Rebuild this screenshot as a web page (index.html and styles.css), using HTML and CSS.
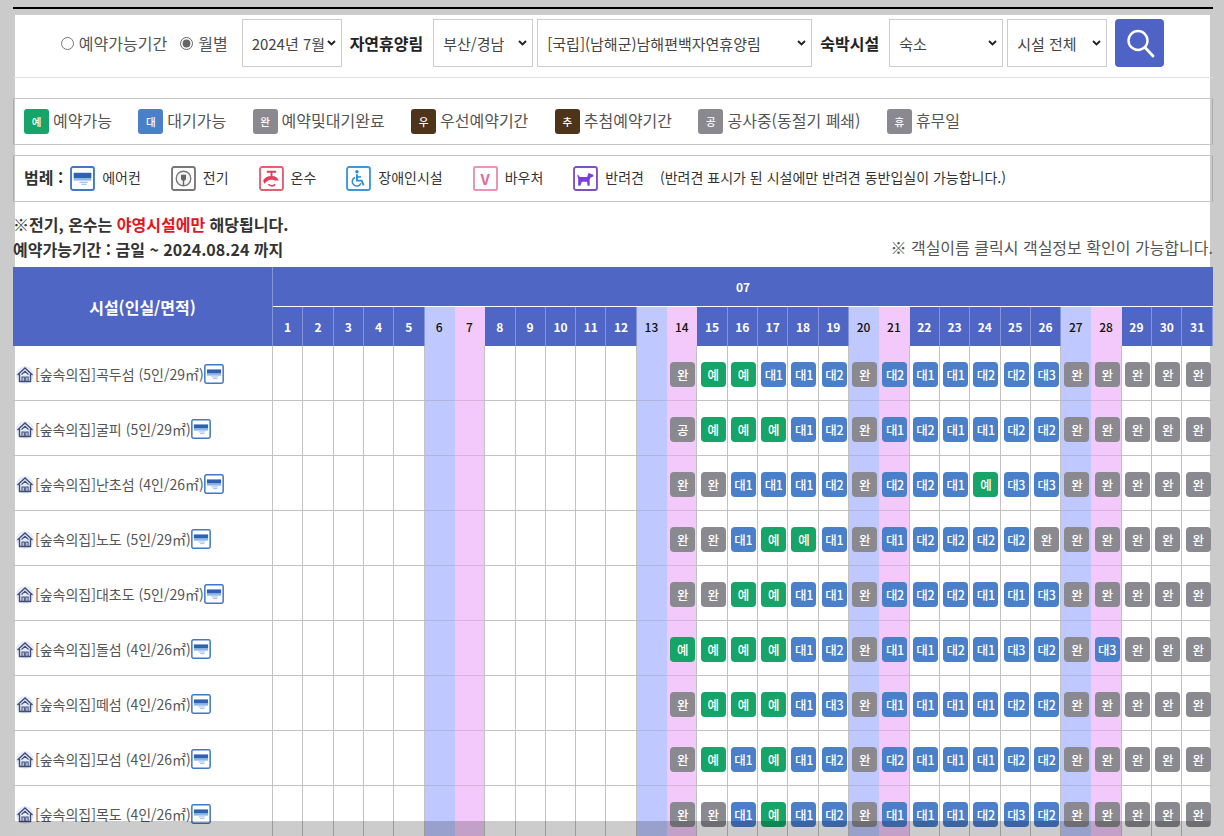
FILE: index.html
```html
<!DOCTYPE html>
<html lang="ko">
<head>
<meta charset="utf-8">
<title>예약현황</title>
<link rel="stylesheet" href="styles.css">
</head>
<body>
<svg class="sprite" aria-hidden="true">
  <defs>
    <symbol id="i-ac" viewBox="0 0 24 24">
      <rect x="1" y="1" width="22" height="22" rx="2" fill="#fff" stroke="#3f78c8" stroke-width="1.8"/>
      <path d="M3.5 6.500h17v5h-17z" fill="#2f62b0"/>
      <path d="M3.5 11.500h17v2.500h-17z" fill="#8db8ea"/>
      <path d="M9 15.500h8M11 17.500h5" stroke="#8fb2e0" stroke-width="1"/>
    </symbol>
    <symbol id="i-plug" viewBox="0 0 24 24">
      <rect x="1" y="1" width="22" height="22" rx="2" fill="#fff" stroke="#777" stroke-width="1.8"/>
      <circle cx="12" cy="12" r="7" fill="#f4f4f4" stroke="#777" stroke-width="1.3"/>
      <path d="M9.6 8.500v3.200a2.400 2.400 0 0 0 4.800 0V8.500z" fill="#666"/>
      <path d="M12 13v6" stroke="#666" stroke-width="1.300"/>
    </symbol>
    <symbol id="i-tap" viewBox="0 0 24 24">
      <rect x="1" y="1" width="22" height="22" rx="2" fill="#fff" stroke="#e85d6f" stroke-width="1.8"/>
      <path d="M7.500 5.500h9M12 5.500v4" stroke="#e0405a" stroke-width="1.800"/>
      <path d="M4 14c1-3 4-4.500 8-4.500s6 1.500 7 4.500h-4c-1-1-5-1-7 .5l-3 2.500z" fill="#e0405a"/>
      <path d="M9 17.500c2 2 5 2 6.500 0" fill="none" stroke="#e0405a" stroke-width="1.600"/>
    </symbol>
    <symbol id="i-wheel" viewBox="0 0 24 24">
      <rect x="1" y="1" width="22" height="22" rx="2" fill="#fff" stroke="#3a9ad9" stroke-width="1.8"/>
      <circle cx="10.500" cy="5.500" r="1.700" fill="#2a8fd4"/>
      <path d="M10.500 8v6h4.500l2 4.500" fill="none" stroke="#2a8fd4" stroke-width="1.800"/>
      <path d="M10.500 10.500h4" stroke="#2a8fd4" stroke-width="1.500"/>
      <path d="M8.500 11a4.300 4.300 0 1 0 5.800 5.500" fill="none" stroke="#2a8fd4" stroke-width="1.500"/>
    </symbol>
    <symbol id="i-dog" viewBox="0 0 24 24">
      <rect x="1" y="1" width="22" height="22" rx="2" fill="#fff" stroke="#7d4fc6" stroke-width="1.8"/>
      <path d="M4.500 8l2 2.500h7l1.500-4 1.500 1 3 1v1.500l-2.500 1-1 2v6h-2l-.5-4h-5l-1.500 4h-2v-6.500l-.8-3.500z" fill="#7a3fd8"/>
    </symbol>
    <symbol id="i-house" viewBox="0 0 18 18">
      <circle cx="9" cy="9" r="9" fill="#e6eaf6"/>
      <path d="M1.500 9L9 2 16.500 9M3.500 8v7.500h11V8" fill="none" stroke="#3f4f7a" stroke-width="1.400"/>
      <path d="M5.500 8.500L9 5.300l3.500 3.200M6 15.500V11h2.300v4.500M9.800 15.500V11h2.300v4.500" fill="none" stroke="#3f4f7a" stroke-width="1.100"/>
    </symbol>
  </defs>
</svg>

<div class="page">
  <div class="rule"></div>
  <main class="sheet">
    <form class="search">
      <label class="radio first"><input type="radio" name="mode">예약가능기간</label>
      <label class="radio second"><input type="radio" name="mode" checked>월별</label>
      <select class="s-month"><option>2024년 7월</option></select>
      <strong class="s-label">자연휴양림</strong>
      <select class="s-region"><option>부산/경남</option></select>
      <select class="s-forest"><option>[국립](남해군)남해편백자연휴양림</option></select>
      <strong class="s-label">숙박시설</strong>
      <select class="s-type"><option>숙소</option></select>
      <select class="s-fac"><option>시설 전체</option></select>
      <button type="button" class="s-btn" aria-label="검색">
        <svg width="30" height="30" viewBox="0 0 30 30"><circle cx="13" cy="12.500" r="9.500" fill="none" stroke="#fff" stroke-width="2.400"/><path d="M20 19.500l8 8.500" stroke="#fff" stroke-width="2.800" stroke-linecap="round"/></svg>
      </button>
    </form>

    <div class="box status">
      <span class="st"><i class="k g">예</i>예약가능</span>
      <span class="st"><i class="k b">대</i>대기가능</span>
      <span class="st"><i class="k x">완</i>예약및대기완료</span>
      <span class="st"><i class="k n">우</i>우선예약기간</span>
      <span class="st"><i class="k n">추</i>추첨예약기간</span>
      <span class="st"><i class="k x">공</i>공사중(동절기 폐쇄)</span>
      <span class="st"><i class="k x">휴</i>휴무일</span>
    </div>

    <div class="box facil">
      <strong class="f-title">범례 :</strong>
      <span class="fi"><svg class="f-ic"><use href="#i-ac"/></svg>에어컨</span>
      <span class="fi"><svg class="f-ic"><use href="#i-plug"/></svg>전기</span>
      <span class="fi"><svg class="f-ic"><use href="#i-tap"/></svg>온수</span>
      <span class="fi"><svg class="f-ic"><use href="#i-wheel"/></svg>장애인시설</span>
      <span class="fi"><b class="f-v">V</b>바우처</span>
      <span class="fi"><svg class="f-ic"><use href="#i-dog"/></svg>반려견</span>
      <span class="f-note">(반려견 표시가 된 시설에만 반려견 동반입실이 가능합니다.)</span>
    </div>

    <p class="warn">※전기, 온수는 <em>야영시설에만</em> 해당됩니다.</p>
    <div class="info">
      <strong>예약가능기간 : 금일 ~ 2024.08.24 까지</strong>
      <span>※ 객실이름 클릭시 객실정보 확인이 가능합니다.</span>
    </div>

    <table class="cal">
      <colgroup>
        <col class="c-room">
        <col span="31" class="c-day">
      </colgroup>
      <thead>
        <tr><th rowspan="2" class="h-room">시설(인실/면적)</th><th colspan="31" class="h-month">07</th></tr>
        <tr class="days"><th>1</th><th>2</th><th>3</th><th>4</th><th>5</th><th>6</th><th>7</th><th>8</th><th>9</th><th>10</th><th>11</th><th>12</th><th>13</th><th>14</th><th>15</th><th>16</th><th>17</th><th>18</th><th>19</th><th>20</th><th>21</th><th>22</th><th>23</th><th>24</th><th>25</th><th>26</th><th>27</th><th>28</th><th>29</th><th>30</th><th>31</th></tr>
      </thead>
      <tbody>
        <tr><td class="room"><svg class="house"><use href="#i-house"/></svg>[숲속의집]곡두섬 (5인/29㎡)<svg class="ac"><use href="#i-ac"/></svg></td><td></td><td></td><td></td><td></td><td></td><td></td><td></td><td></td><td></td><td></td><td></td><td></td><td></td>
          <td><i class="c x">완</i></td><td><i class="c g">예</i></td><td><i class="c g">예</i></td><td><i class="c b">대1</i></td><td><i class="c b">대1</i></td><td><i class="c b">대2</i></td><td><i class="c x">완</i></td><td><i class="c b">대2</i></td><td><i class="c b">대1</i></td><td><i class="c b">대1</i></td><td><i class="c b">대2</i></td><td><i class="c b">대2</i></td><td><i class="c b">대3</i></td><td><i class="c x">완</i></td><td><i class="c x">완</i></td><td><i class="c x">완</i></td><td><i class="c x">완</i></td><td><i class="c x">완</i></td></tr>
        <tr><td class="room"><svg class="house"><use href="#i-house"/></svg>[숲속의집]굴피 (5인/29㎡)<svg class="ac"><use href="#i-ac"/></svg></td><td></td><td></td><td></td><td></td><td></td><td></td><td></td><td></td><td></td><td></td><td></td><td></td><td></td>
          <td><i class="c x">공</i></td><td><i class="c g">예</i></td><td><i class="c g">예</i></td><td><i class="c g">예</i></td><td><i class="c b">대1</i></td><td><i class="c b">대2</i></td><td><i class="c x">완</i></td><td><i class="c b">대1</i></td><td><i class="c b">대2</i></td><td><i class="c b">대1</i></td><td><i class="c b">대1</i></td><td><i class="c b">대2</i></td><td><i class="c b">대2</i></td><td><i class="c x">완</i></td><td><i class="c x">완</i></td><td><i class="c x">완</i></td><td><i class="c x">완</i></td><td><i class="c x">완</i></td></tr>
        <tr><td class="room"><svg class="house"><use href="#i-house"/></svg>[숲속의집]난초섬 (4인/26㎡)<svg class="ac"><use href="#i-ac"/></svg></td><td></td><td></td><td></td><td></td><td></td><td></td><td></td><td></td><td></td><td></td><td></td><td></td><td></td>
          <td><i class="c x">완</i></td><td><i class="c x">완</i></td><td><i class="c b">대1</i></td><td><i class="c b">대1</i></td><td><i class="c b">대1</i></td><td><i class="c b">대2</i></td><td><i class="c x">완</i></td><td><i class="c b">대2</i></td><td><i class="c b">대2</i></td><td><i class="c b">대1</i></td><td><i class="c g">예</i></td><td><i class="c b">대3</i></td><td><i class="c b">대3</i></td><td><i class="c x">완</i></td><td><i class="c x">완</i></td><td><i class="c x">완</i></td><td><i class="c x">완</i></td><td><i class="c x">완</i></td></tr>
        <tr><td class="room"><svg class="house"><use href="#i-house"/></svg>[숲속의집]노도 (5인/29㎡)<svg class="ac"><use href="#i-ac"/></svg></td><td></td><td></td><td></td><td></td><td></td><td></td><td></td><td></td><td></td><td></td><td></td><td></td><td></td>
          <td><i class="c x">완</i></td><td><i class="c x">완</i></td><td><i class="c b">대1</i></td><td><i class="c g">예</i></td><td><i class="c g">예</i></td><td><i class="c b">대1</i></td><td><i class="c x">완</i></td><td><i class="c b">대1</i></td><td><i class="c b">대2</i></td><td><i class="c b">대2</i></td><td><i class="c b">대2</i></td><td><i class="c b">대2</i></td><td><i class="c x">완</i></td><td><i class="c x">완</i></td><td><i class="c x">완</i></td><td><i class="c x">완</i></td><td><i class="c x">완</i></td><td><i class="c x">완</i></td></tr>
        <tr><td class="room"><svg class="house"><use href="#i-house"/></svg>[숲속의집]대초도 (5인/29㎡)<svg class="ac"><use href="#i-ac"/></svg></td><td></td><td></td><td></td><td></td><td></td><td></td><td></td><td></td><td></td><td></td><td></td><td></td><td></td>
          <td><i class="c x">완</i></td><td><i class="c x">완</i></td><td><i class="c g">예</i></td><td><i class="c g">예</i></td><td><i class="c b">대1</i></td><td><i class="c b">대1</i></td><td><i class="c x">완</i></td><td><i class="c b">대2</i></td><td><i class="c b">대2</i></td><td><i class="c b">대2</i></td><td><i class="c b">대1</i></td><td><i class="c b">대1</i></td><td><i class="c b">대3</i></td><td><i class="c x">완</i></td><td><i class="c x">완</i></td><td><i class="c x">완</i></td><td><i class="c x">완</i></td><td><i class="c x">완</i></td></tr>
        <tr><td class="room"><svg class="house"><use href="#i-house"/></svg>[숲속의집]돌섬 (4인/26㎡)<svg class="ac"><use href="#i-ac"/></svg></td><td></td><td></td><td></td><td></td><td></td><td></td><td></td><td></td><td></td><td></td><td></td><td></td><td></td>
          <td><i class="c g">예</i></td><td><i class="c g">예</i></td><td><i class="c g">예</i></td><td><i class="c g">예</i></td><td><i class="c b">대1</i></td><td><i class="c b">대2</i></td><td><i class="c x">완</i></td><td><i class="c b">대1</i></td><td><i class="c b">대1</i></td><td><i class="c b">대2</i></td><td><i class="c b">대1</i></td><td><i class="c b">대3</i></td><td><i class="c b">대2</i></td><td><i class="c x">완</i></td><td><i class="c b">대3</i></td><td><i class="c x">완</i></td><td><i class="c x">완</i></td><td><i class="c x">완</i></td></tr>
        <tr><td class="room"><svg class="house"><use href="#i-house"/></svg>[숲속의집]떼섬 (4인/26㎡)<svg class="ac"><use href="#i-ac"/></svg></td><td></td><td></td><td></td><td></td><td></td><td></td><td></td><td></td><td></td><td></td><td></td><td></td><td></td>
          <td><i class="c x">완</i></td><td><i class="c g">예</i></td><td><i class="c g">예</i></td><td><i class="c g">예</i></td><td><i class="c b">대1</i></td><td><i class="c b">대3</i></td><td><i class="c x">완</i></td><td><i class="c b">대1</i></td><td><i class="c b">대1</i></td><td><i class="c b">대1</i></td><td><i class="c b">대1</i></td><td><i class="c b">대2</i></td><td><i class="c b">대2</i></td><td><i class="c x">완</i></td><td><i class="c x">완</i></td><td><i class="c x">완</i></td><td><i class="c x">완</i></td><td><i class="c x">완</i></td></tr>
        <tr><td class="room"><svg class="house"><use href="#i-house"/></svg>[숲속의집]모섬 (4인/26㎡)<svg class="ac"><use href="#i-ac"/></svg></td><td></td><td></td><td></td><td></td><td></td><td></td><td></td><td></td><td></td><td></td><td></td><td></td><td></td>
          <td><i class="c x">완</i></td><td><i class="c g">예</i></td><td><i class="c b">대1</i></td><td><i class="c g">예</i></td><td><i class="c b">대1</i></td><td><i class="c b">대2</i></td><td><i class="c x">완</i></td><td><i class="c b">대2</i></td><td><i class="c b">대1</i></td><td><i class="c b">대1</i></td><td><i class="c b">대1</i></td><td><i class="c b">대2</i></td><td><i class="c b">대2</i></td><td><i class="c x">완</i></td><td><i class="c x">완</i></td><td><i class="c x">완</i></td><td><i class="c x">완</i></td><td><i class="c x">완</i></td></tr>
        <tr><td class="room"><svg class="house"><use href="#i-house"/></svg>[숲속의집]목도 (4인/26㎡)<svg class="ac"><use href="#i-ac"/></svg></td><td></td><td></td><td></td><td></td><td></td><td></td><td></td><td></td><td></td><td></td><td></td><td></td><td></td>
          <td><i class="c x">완</i></td><td><i class="c x">완</i></td><td><i class="c b">대1</i></td><td><i class="c g">예</i></td><td><i class="c b">대1</i></td><td><i class="c b">대2</i></td><td><i class="c x">완</i></td><td><i class="c b">대1</i></td><td><i class="c b">대1</i></td><td><i class="c b">대1</i></td><td><i class="c b">대2</i></td><td><i class="c b">대3</i></td><td><i class="c b">대2</i></td><td><i class="c x">완</i></td><td><i class="c x">완</i></td><td><i class="c x">완</i></td><td><i class="c x">완</i></td><td><i class="c x">완</i></td></tr>
      </tbody>
    </table>
    <div class="shade"></div>
  </main>
</div>
</body>
</html>
```

FILE: styles.css
```css
* { box-sizing: border-box; }
html, body { margin: 0; height: 836px; overflow: hidden; }
body {
  background: #cbcbcb;
  color: #444;
  font-family: "Noto Sans CJK KR", "Noto Sans", sans-serif;
  font-size: 16px;
}
.sprite { position: absolute; width: 0; height: 0; }
.page { padding: 7px 0 0 13px; width: 1213px; }
.rule { height: 2px; background: #000; }
.sheet {
  position: relative;
  margin: 6px 3px 0 2px;
  background: #fff;
  height: 821px;
}

/* search row */
.search {
  height: 63px;
  border-bottom: 1px solid #ddd;
  padding: 4px 1px 10px 0;
  display: flex;
  justify-content: center;
  align-items: stretch;
  gap: 4px;
  margin-left: -2px;
  margin-right: -3px;
}
.radio { display: flex; align-items: center; gap: 5px; color: #555; font-size: 16px; height: 48px; }
.radio input { margin: 0; width: 13px; height: 13px; accent-color: #666; }
.radio.second { margin-left: 9px; margin-right: 10px; }
.search select {
  appearance: none;
  height: 48px;
  border: 1px solid #ccc;
  background: #fff url("data:image/svg+xml,%3Csvg xmlns='http://www.w3.org/2000/svg' width='9' height='6' viewBox='0 0 9 6'%3E%3Cpath d='M1 1l3.500 3.500L8 1' fill='none' stroke='%23222' stroke-width='1.900'/%3E%3C/svg%3E") no-repeat right 5px center;
  color: #444;
  font: 15px "Noto Sans CJK KR", sans-serif;
  padding: 0 14px 0 9px;
  border-radius: 0;
}
.s-month { width: 100px; }
.s-region { width: 100px; }
.s-forest { width: 275px; }
.s-type { width: 114px; }
.s-fac { width: 100px; }
.s-label { color: #222; font-size: 16px; font-weight: 700; line-height: 48px; margin: 0 6px 0 4px; white-space: nowrap; }
.s-btn {
  width: 49px;
  height: 48px;
  margin-left: 4px;
  background: #4f63c6;
  border: 0;
  border-radius: 4px;
  padding: 0;
  display: flex;
  align-items: center;
  justify-content: center;
}

/* legend boxes */
.box {
  margin-left: -2px;
  margin-right: -3px;
  border: 1px solid #c4c4c4;
  border-left-color: #aaa;
  border-right-color: #aaa;
  display: flex;
  align-items: center;
  white-space: nowrap;
}
.status { height: 47px; margin-top: 20px; padding-left: 10px; gap: 26.400px; color: #555; }
.st { display: flex; align-items: flex-start; gap: 4px; font-size: 16px; line-height: 23px; }
.k {
  width: 25px;
  height: 25px;
  border-radius: 3px;
  color: #fff;
  font-style: normal;
  font-size: 10.500px;
  font-weight: 500;
  display: flex;
  align-items: center;
  justify-content: center;
}
.g { background: #17a468; }
.b { background: #4a7fc9; }
.x { background: #89898f; }
.n { background: #4e3418; }
.facil { height: 47px; margin-top: 10px; padding-left: 10px; color: #333; font-size: 14px; }
.f-title { font-size: 16px; font-weight: 700; margin: 0 7px 4px 0; color: #333; }
.fi { display: flex; align-items: flex-start; gap: 7px; margin-right: 30px; line-height: 23px; }
.f-ic { width: 25px; height: 25px; }
.f-v {
  width: 25px;
  height: 25px;
  border: 2px solid #ef93b6;
  border-radius: 2px;
  color: #e56a9c;
  font-size: 15px;
  font-weight: 700;
  display: flex;
  align-items: center;
  justify-content: center;
}
.fi:nth-last-child(2) { margin-right: 16px; }
.f-note { font-size: 14px; margin-bottom: 3px; }

/* notes */
.warn {
  margin: 11px -3px 0 -2px;
  height: 24px;
  line-height: 22px;
  font-size: 16px;
  font-weight: 700;
  color: #333;
}
.warn em { font-style: normal; color: #e8141c; }
.info {
  margin: 0 -3px 0 -2px;
  height: 30px;
  display: flex;
  justify-content: space-between;
  align-items: flex-start;
  white-space: nowrap;
}
.info strong { font-size: 16px; font-weight: 700; color: #333; line-height: 24px; }
.info span { font-size: 16px; color: #555; line-height: 20px; }

/* calendar */
.cal {
  width: 1200px;
  margin-left: -2px;
  border-collapse: separate;
  border-spacing: 0;
  table-layout: fixed;
  font-family: "Noto Sans CJK KR", sans-serif;
}
.c-room { width: 260px; }
.cal th {
  background: #5066c4;
  color: #fff;
  font-weight: 700;
  padding: 0;
  border-right: 1px solid #8593d8;
}
.h-room { font-size: 16px; height: 79px; }
.h-month { height: 40px; font-size: 12px; border-right: 0 !important; border-bottom: 1px solid #fff; }
.days th { height: 39px; font-size: 12px; }
.days th:nth-child(6), .days th:nth-child(13), .days th:nth-child(20), .days th:nth-child(27) {
  background: #bfc8ff; color: #111; font-weight: 500; border-right-color: #bfc8ff;
}
.days th:nth-child(7), .days th:nth-child(14), .days th:nth-child(21), .days th:nth-child(28) {
  background: #f3c9fb; color: #111; font-weight: 500; border-right-color: #f3c9fb;
}
.cal td {
  height: 55px;
  padding: 0;
  text-align: center;
  vertical-align: middle;
  border-right: 1px solid #c2c2c2;
  border-bottom: 1px solid #c2c2c2;
}
.cal td:last-child { border-right-color: transparent; }
.cal td:nth-child(7), .cal td:nth-child(14), .cal td:nth-child(21), .cal td:nth-child(28) {
  background: #bfc8ff;
  border-right-color: #bfc8ff;
  border-bottom-color: #b0b4dc;
}
.cal td:nth-child(8), .cal td:nth-child(15), .cal td:nth-child(22), .cal td:nth-child(29) {
  background: #f3c9fb;
  border-bottom-color: #d4b4dc;
}
.cal td.room {
  background: transparent;
  text-align: left;
  white-space: nowrap;
  color: #555;
  font-size: 14px;
  padding: 1px 0 0 3px;
}
.house { width: 18px; height: 18px; vertical-align: -4px; margin-right: 1px; }
.ac { width: 20px; height: 20px; vertical-align: -4px; }
.c {
  display: inline-flex;
  width: 25px;
  height: 25px;
  margin-left: 2px;
  border-radius: 4px;
  color: #fff;
  font-style: normal;
  font-size: 12.500px;
  font-weight: 500;
  align-items: center;
  justify-content: center;
  vertical-align: middle;
  letter-spacing: -0.3px;
}

/* translucent bottom band that lies over the page */
.shade {
  position: absolute;
  left: 0;
  right: 0;
  bottom: 0;
  top: 806px;
  background: rgba(0, 0, 0, .2);
}
```
